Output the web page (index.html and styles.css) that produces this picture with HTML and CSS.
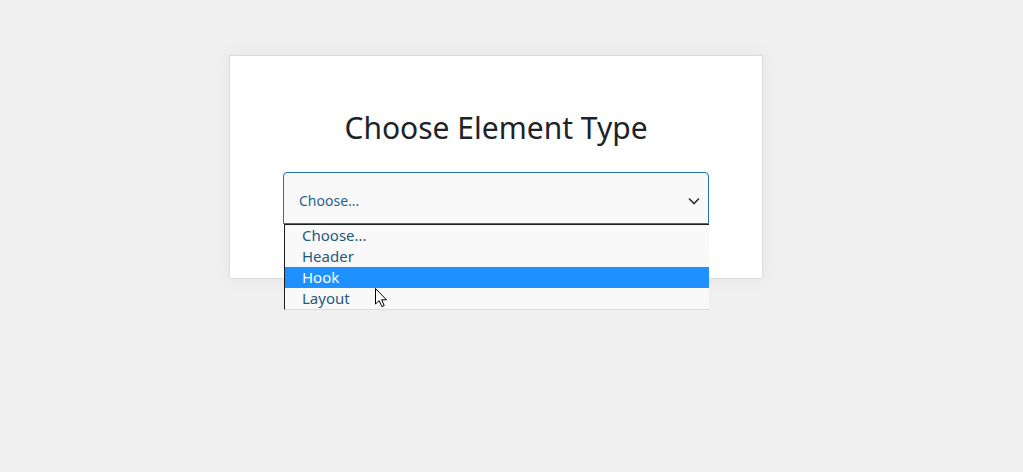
FILE: index.html
```html
<!DOCTYPE html>
<html>
<head>
<meta charset="utf-8">
<link rel="stylesheet" href="styles.css">
</head>
<body>
<div class="page">
  <div class="card">
    <h1 class="title">Choose Element Type</h1>
    <div class="select-wrap">
      <div class="select">
        <span class="select-value">Choose...</span>
        <svg class="chevron" width="12" height="8" viewBox="0 0 12 8"><path d="M1 1.5 L6 6.5 L11 1.5" fill="none" stroke="#2c3338" stroke-width="1.6"/></svg>
      </div>
      <ul class="options">
        <li class="option">Choose...</li>
        <li class="option">Header</li>
        <li class="option option-active">Hook</li>
        <li class="option">Layout</li>
      </ul>
      <svg class="cursor" width="14" height="21" viewBox="0 0 14 21"><path d="M0.5 0.5 L0.5 16 L4.2 12.6 L6.8 18.6 L9.2 17.6 L6.7 11.8 L11.5 11.8 Z" fill="#fff" stroke="#000" stroke-width="1" stroke-linejoin="round"/></svg>
    </div>
  </div>
</div>
</body>
</html>
```

FILE: styles.css
```css
html, body {
  margin: 0;
  padding: 0;
}
body {
  background: #f0f0f0;
  font-family: "Noto Sans", "Open Sans", sans-serif;
  width: 1023px;
  height: 472px;
  overflow: hidden;
}
.page {
  padding-top: 55px;
  padding-left: 229px;
}
.card {
  background: #fff;
  border: 1px solid #dcdcde;
  box-shadow: 0 0 18px rgba(0, 0, 0, 0.05);
  padding: 0 53px;
  box-sizing: border-box;
  width: 534px;
  height: 224px;
}
.title {
  margin: 0;
  padding-top: 52px;
  font-size: 30px;
  line-height: 40px;
  font-weight: 400;
  color: #1d2327;
  text-align: center;
}
.select-wrap {
  position: relative;
  margin-top: 24px;
}
.select {
  height: 52px;
  box-sizing: border-box;
  border: 1px solid #2271b1;
  border-radius: 4px 4px 0 0;
  background: #f9f9f9;
  display: flex;
  align-items: center;
  justify-content: space-between;
  padding: 4px 8px 0 15px;
}
.select-value {
  font-size: 14px;
  color: #1e6391;
}
.chevron {
  display: block;
  margin-top: 2px;
}
.options {
  position: absolute;
  top: 52px;
  left: 1px;
  right: 0;
  margin: 0;
  padding: 0;
  list-style: none;
  background: #f9f9f9;
  border-top: 1px solid #1d1d1d;
  border-left: 1px solid #1d1d1d;
  border-bottom: 1px solid #dcdcdc;
}
.option {
  height: 21px;
  line-height: 21px;
  padding-left: 17px;
  font-size: 15px;
  color: #1e5a80;
}
.option-active {
  background: #1e90ff;
  color: #fff;
}
.cursor {
  position: absolute;
  left: 92px;
  top: 116px;
}
```
